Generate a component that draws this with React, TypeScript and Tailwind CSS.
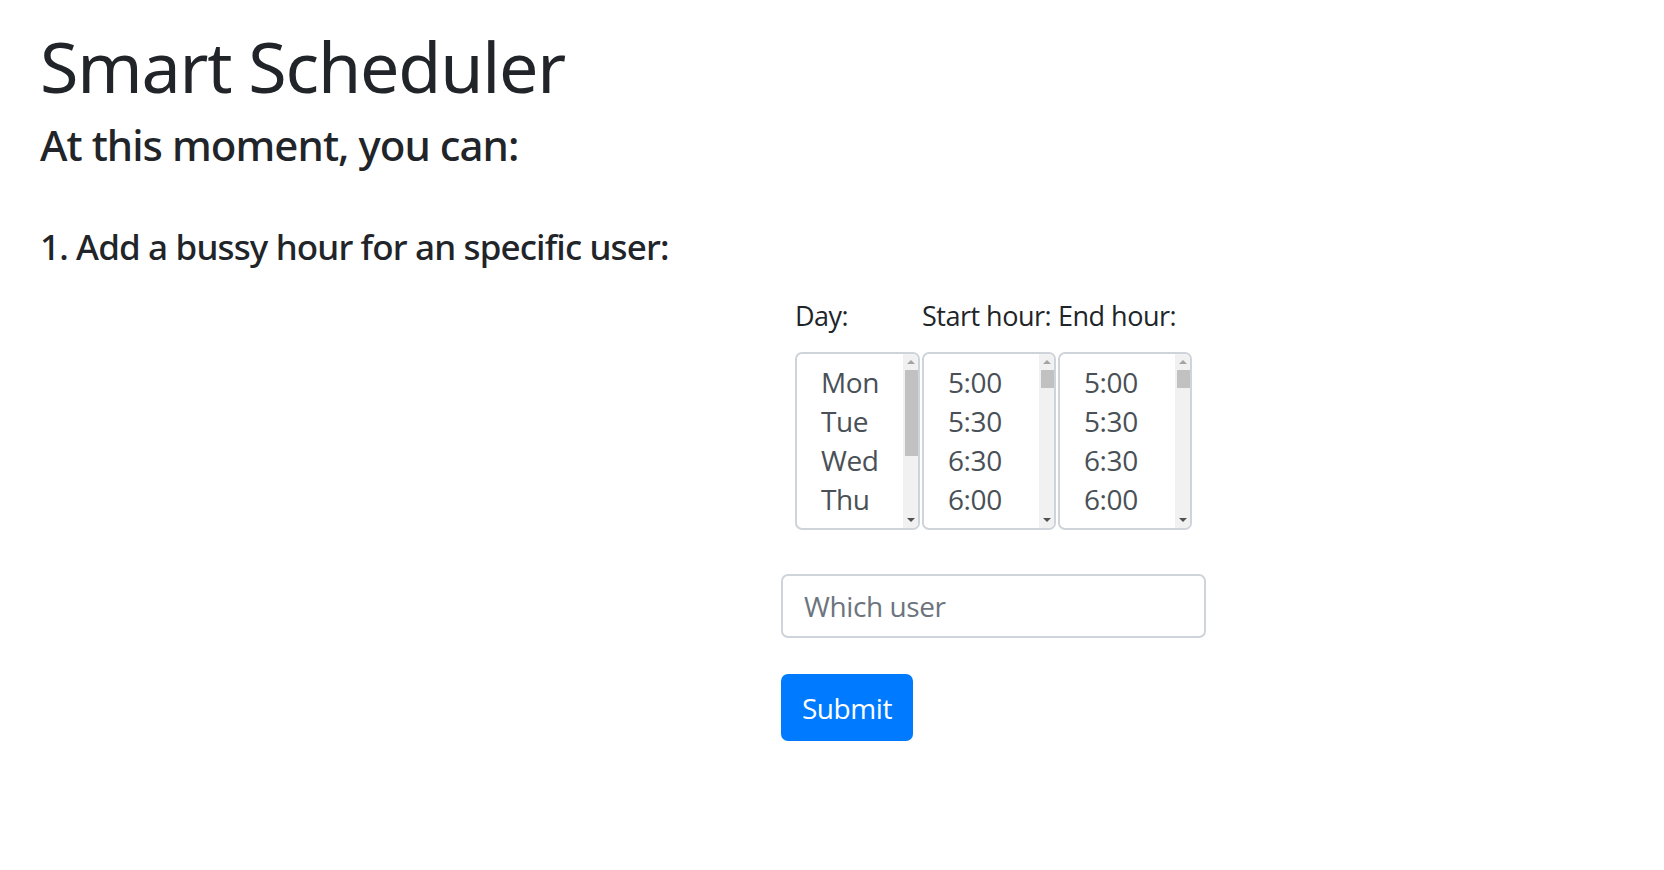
import React from 'react';

const DAYS = ['Mon', 'Tue', 'Wed', 'Thu', 'Fri', 'Sat', 'Sun'];
const HOURS = ['5:00', '5:30', '6:30', '6:00', '7:00', '7:30', '8:00', '8:30'];

type ListBoxProps = {
  items: string[];
  thumbClass: string;
};

// fake <select multiple size=4> so the scrollbar looks the same everywhere
function ListBox({ items, thumbClass }: ListBoxProps) {
  return (
    <div className="flex h-[178px] w-full overflow-hidden rounded-[7px] border-2 border-[#ced4da] bg-white">
      <ul className="flex-1 overflow-hidden pt-[9px] pl-[24px] text-[28px] leading-[39px] tracking-[-0.4px] text-[#495057]">
        {items.map((item) => (
          <li key={item}>{item}</li>
        ))}
      </ul>
      <div className="flex w-[15px] flex-col bg-[#f1f1f1]">
        <div className="flex h-[16px] items-center justify-center">
          <span className="block h-0 w-0 border-x-[4px] border-b-[4px] border-x-transparent border-b-[#a3a3a3]" />
        </div>
        <div className="flex-1 pl-[2px]">
          <div className={`w-full bg-[#c1c1c1] ${thumbClass}`} />
        </div>
        <div className="flex h-[16px] items-center justify-center">
          <span className="block h-0 w-0 border-x-[4px] border-t-[4px] border-x-transparent border-t-[#505050]" />
        </div>
      </div>
    </div>
  );
}

export default function App() {
  return (
    <div className="min-h-screen bg-white font-['Open_Sans','Noto_Sans',sans-serif] text-[#212529]">
      <div className="pl-[40px] pt-[24px] font-['Noto_Sans','Open_Sans',sans-serif]">
        <h1 className="text-[70px] leading-[84px] tracking-[-1.2px]">Smart Scheduler</h1>
        <h4 className="mt-[12px] text-[42px] font-medium leading-[50px] tracking-[-0.95px]">At this moment, you can:</h4>
        <h5 className="mt-[56px] text-[35px] font-medium leading-[42px] tracking-[-0.85px]">
          1. Add a bussy hour for an specific user:
        </h5>
      </div>

      <form className="ml-[781px] mt-[27px]" onSubmit={(e) => e.preventDefault()}>
        <div className="ml-[14px] flex gap-[2px]">
          <div className="w-[125px]">
            <label className="block whitespace-nowrap text-[27px] leading-[42px] tracking-[-0.5px]">Day:</label>
            <div className="mt-[15px]">
              <ListBox items={DAYS} thumbClass="h-[86px]" />
            </div>
          </div>
          <div className="w-[134px]">
            <label className="block whitespace-nowrap text-[27px] leading-[42px] tracking-[-0.5px]">Start hour:</label>
            <div className="mt-[15px]">
              <ListBox items={HOURS} thumbClass="h-[18px]" />
            </div>
          </div>
          <div className="w-[134px]">
            <label className="block whitespace-nowrap text-[27px] leading-[42px] tracking-[-0.5px]">End hour:</label>
            <div className="mt-[15px]">
              <ListBox items={HOURS} thumbClass="h-[18px]" />
            </div>
          </div>
        </div>

        <input
          type="text"
          placeholder="Which user"
          className="mt-[44px] block h-[64px] w-[425px] rounded-[7px] border-2 border-[#ced4da] px-[21px] text-[28px] tracking-[-0.4px] text-[#495057] outline-none placeholder:text-[#6c757d]"
        />

        <button
          type="submit"
          className="mt-[36px] block h-[67px] w-[132px] rounded-[7px] bg-[#007bff] text-[28px] tracking-[-0.4px] text-white"
        >
          Submit
        </button>
      </form>
    </div>
  );
}
